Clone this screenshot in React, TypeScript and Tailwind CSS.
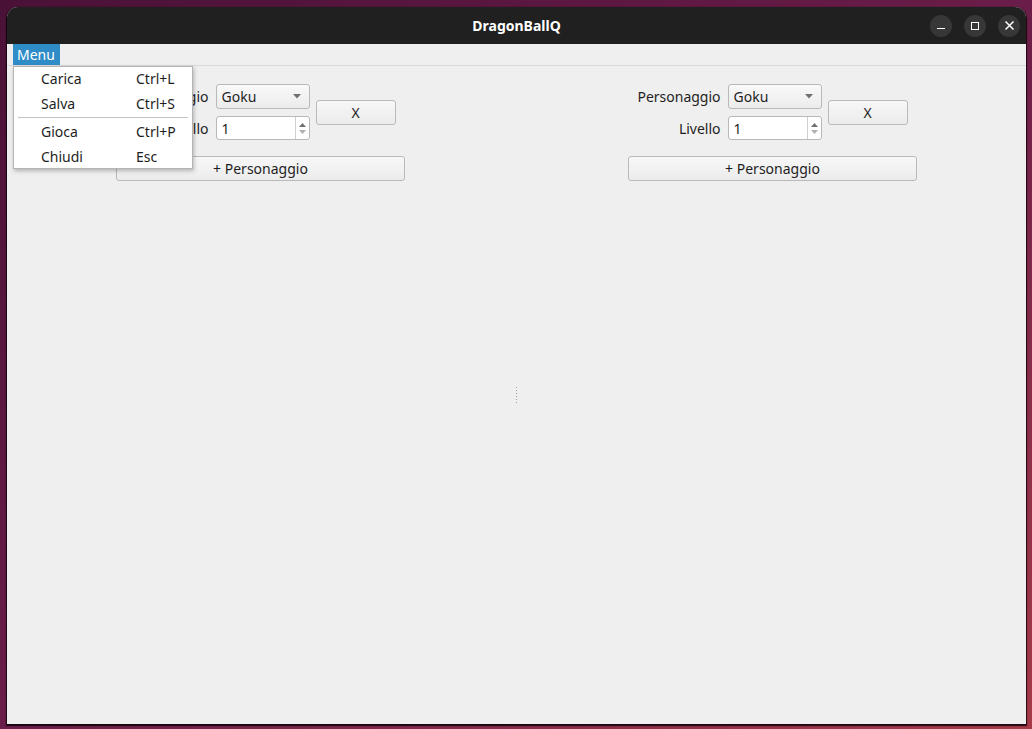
import React from "react";

const font = { fontFamily: '"Noto Sans", "Open Sans", sans-serif' };

function Combo() {
  return (
    <div className="w-[94px] h-[25px] rounded-[3px] border border-[#b9b9b9] bg-gradient-to-b from-[#f9f9f9] to-[#ececec] flex items-center pl-[5px] pr-[8px] text-[14px] text-[#1e1e1e]">
      <span className="flex-1">Goku</span>
      <svg width="8" height="5" viewBox="0 0 8 5"><path d="M0 0h8L4 4.5z" fill="#707070" /></svg>
    </div>
  );
}

function Spin() {
  return (
    <div className="w-[94px] h-[24px] rounded-[3px] border border-[#b9b9b9] bg-white flex items-stretch text-[14px] text-[#1e1e1e]">
      <span className="flex-1 pl-[5px] flex items-center">1</span>
      <div className="w-[14px] border-l border-[#d0d0d0] flex flex-col items-center justify-center gap-[3px]">
        <svg width="7" height="4" viewBox="0 0 7 4"><path d="M0 4h7L3.5 0z" fill="#707070" /></svg>
        <svg width="7" height="4" viewBox="0 0 7 4"><path d="M0 0h7L3.5 4z" fill="#b0b0b0" /></svg>
      </div>
    </div>
  );
}

function Btn({ children, w }: { children: React.ReactNode; w: string }) {
  return (
    <div className={`${w} h-[25px] rounded-[3px] border border-[#b9b9b9] bg-gradient-to-b from-[#f7f7f7] to-[#ececec] flex items-center justify-center text-[14px] text-[#1e1e1e]`}>
      {children}
    </div>
  );
}

function Pane() {
  return (
    <div className="flex-1 flex flex-col items-center pt-[18px]">
      <div className="flex items-center gap-[6px]">
        <div className="grid grid-cols-[auto_auto] gap-x-[7px] gap-y-[7px] items-center">
          <span className="text-right text-[14px] text-[#1e1e1e]">Personaggio</span>
          <Combo />
          <span className="text-right text-[14px] text-[#1e1e1e]">Livello</span>
          <Spin />
        </div>
        <Btn w="w-[80px]">X</Btn>
      </div>
      <div className="mt-[16px]">
        <Btn w="w-[289px]">+ Personaggio</Btn>
      </div>
    </div>
  );
}

export default function App() {
  return (
    <div
      className="w-[1032px] h-[729px] overflow-hidden bg-gradient-to-br from-[#4a1136] via-[#6a1d48] to-[#a63a48] pt-[7px] pl-[7px]"
      style={font}
    >
      <div className="relative w-[1019px] h-[717px] rounded-t-[11px] bg-[#efefef] flex flex-col shadow-[0_1px_1px_1px_rgba(10,0,8,0.85)]">
        <div className="h-[37px] rounded-t-[11px] bg-[#202020] flex items-center relative">
          <div className="absolute inset-0 flex items-center justify-center text-white font-bold text-[14px]">DragonBallQ</div>
          <div className="ml-auto mr-[6px] flex items-center gap-[12px] relative">
            <div className="w-[22px] h-[22px] rounded-full bg-[#373737] flex items-center justify-center">
              <div className="w-[8px] h-[1.5px] bg-white mt-[6px]" />
            </div>
            <div className="w-[22px] h-[22px] rounded-full bg-[#373737] flex items-center justify-center">
              <div className="w-[8px] h-[8px] border-[1.5px] border-white" />
            </div>
            <div className="w-[22px] h-[22px] rounded-full bg-[#373737] flex items-center justify-center">
              <svg width="9" height="9" viewBox="0 0 9 9"><path d="M0.5 0.5l8 8M8.5 0.5l-8 8" stroke="white" strokeWidth="1.5" /></svg>
            </div>
          </div>
        </div>
        <div className="h-[22px] border-b border-[#d9d9d9] flex items-stretch pl-[6px]">
          <div className="bg-[#308cc6] text-white text-[14px] pl-[4px] pr-[5px] flex items-center h-[21px]">Menu</div>
        </div>
        <div className="flex-1 flex relative">
          <Pane />
          <div className="w-[4px] flex flex-col items-center justify-center gap-[2px]">
            {[0, 1, 2, 3, 4, 5].map((i) => (
              <div key={i} className="w-[1px] h-[1px] bg-[#a0a0a0]" />
            ))}
          </div>
          <div className="flex-1 flex pl-[1px]">
            <Pane />
          </div>
          <div className="absolute left-[6px] top-[0px] w-[180px] bg-white border border-[#b4b4b4] shadow-[1px_2px_4px_rgba(0,0,0,0.25)] text-[14px] text-[#1e1e1e]">
            <div className="h-[25px] pb-[2px] flex items-center"><span className="pl-[27px] w-[122px]">Carica</span><span>Ctrl+L</span></div>
            <div className="h-[25px] pb-[2px] flex items-center"><span className="pl-[27px] w-[122px]">Salva</span><span>Ctrl+S</span></div>
            <div className="h-[1px] bg-[#c4c4c4] mx-[4px] mb-[2px]" />
            <div className="h-[24px] pb-[2px] flex items-center"><span className="pl-[27px] w-[122px]">Gioca</span><span>Ctrl+P</span></div>
            <div className="h-[24px] pb-[0px] flex items-center"><span className="pl-[27px] w-[122px]">Chiudi</span><span>Esc</span></div>
          </div>
        </div>
      </div>
    </div>
  );
}
